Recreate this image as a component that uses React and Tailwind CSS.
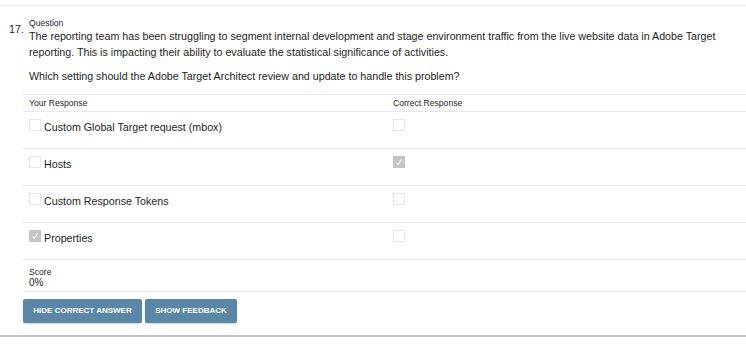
import React from "react";

function Box({ checked }) {
  if (checked) {
    return (
      <span className="inline-flex w-[12px] h-[12px] bg-[#c4c4c4] items-center justify-center shrink-0">
        <svg width="8" height="8" viewBox="0 0 8 8">
          <path d="M1.5 4.5 L3.2 6.3 L6.6 1.4" fill="none" stroke="#f4f4f4" strokeWidth="1.1" />
        </svg>
      </span>
    );
  }
  return <span className="inline-block w-[12px] h-[12px] border border-[#e6e6e6] bg-white shrink-0" />;
}

const rows = [
  { label: "Custom Global Target request (mbox)", mine: false, correct: false },
  { label: "Hosts", mine: false, correct: true },
  { label: "Custom Response Tokens", mine: false, correct: false },
  { label: "Properties", mine: true, correct: false },
];

export default function App() {
  return (
    <div className="w-[746px] h-[346px] bg-white text-[#1e1e1e] font-['Liberation_Sans',Arial,sans-serif] overflow-hidden">
      <div className="h-[6px] border-b border-[#ececec]" />
      <div className="border-b-2 border-[#c4c4c4] h-[331px] flex">
        <div className="w-[23px] pl-[9px] pt-[17px] text-[10.7px] leading-[12px] shrink-0">17.</div>
        <div className="flex-1 flex flex-col">
          <div className="pl-[6px] pr-[20px] pt-[12px]">
            <div className="text-[8.6px] leading-[10px]">Question</div>
            <p className="text-[10.7px] leading-[16px]">
              The reporting team has been struggling to segment internal development and stage environment traffic from the live website data in Adobe Target reporting. This is impacting their ability to evaluate the statistical significance of activities.
            </p>
            <p className="text-[10.7px] leading-[16px] mt-[8px]">
              Which setting should the Adobe Target Architect review and update to handle this problem?
            </p>
          </div>
          <div className="mt-[10px] border-t border-[#e8e8e8] h-[17px] flex items-center text-[8.6px]">
            <div className="w-[370px] pl-[6px]">Your Response</div>
            <div>Correct Response</div>
          </div>
          {rows.map((r) => (
            <div key={r.label} className="border-t border-[#e8e8e8] h-[37px] flex items-start pt-[7px]">
              <div className="w-[370px] pl-[6px] flex items-start gap-[3px]">
                <Box checked={r.mine} />
                <span className="text-[10.7px] leading-[12px] mt-[2px]">{r.label}</span>
              </div>
              <div className="flex">
                <Box checked={r.correct} />
              </div>
            </div>
          ))}
          <div className="border-t border-b border-[#e8e8e8] h-[33px] pl-[6px] pt-[7px]">
            <div className="text-[8.6px] leading-[10px]">Score</div>
            <div className="text-[10px] leading-[11px]">0%</div>
          </div>
          <div className="flex gap-[3px] mt-[7px]">
            <button className="w-[119px] h-[24px] bg-[#5a87a5] text-white text-[8px] font-bold rounded-[2px] shadow-[0_1px_2px_rgba(0,0,0,0.2)]">
              HIDE CORRECT ANSWER
            </button>
            <button className="w-[92px] h-[24px] bg-[#5a87a5] text-white text-[8px] font-bold rounded-[2px] shadow-[0_1px_2px_rgba(0,0,0,0.2)]">
              SHOW FEEDBACK
            </button>
          </div>
        </div>
      </div>
    </div>
  );
}
